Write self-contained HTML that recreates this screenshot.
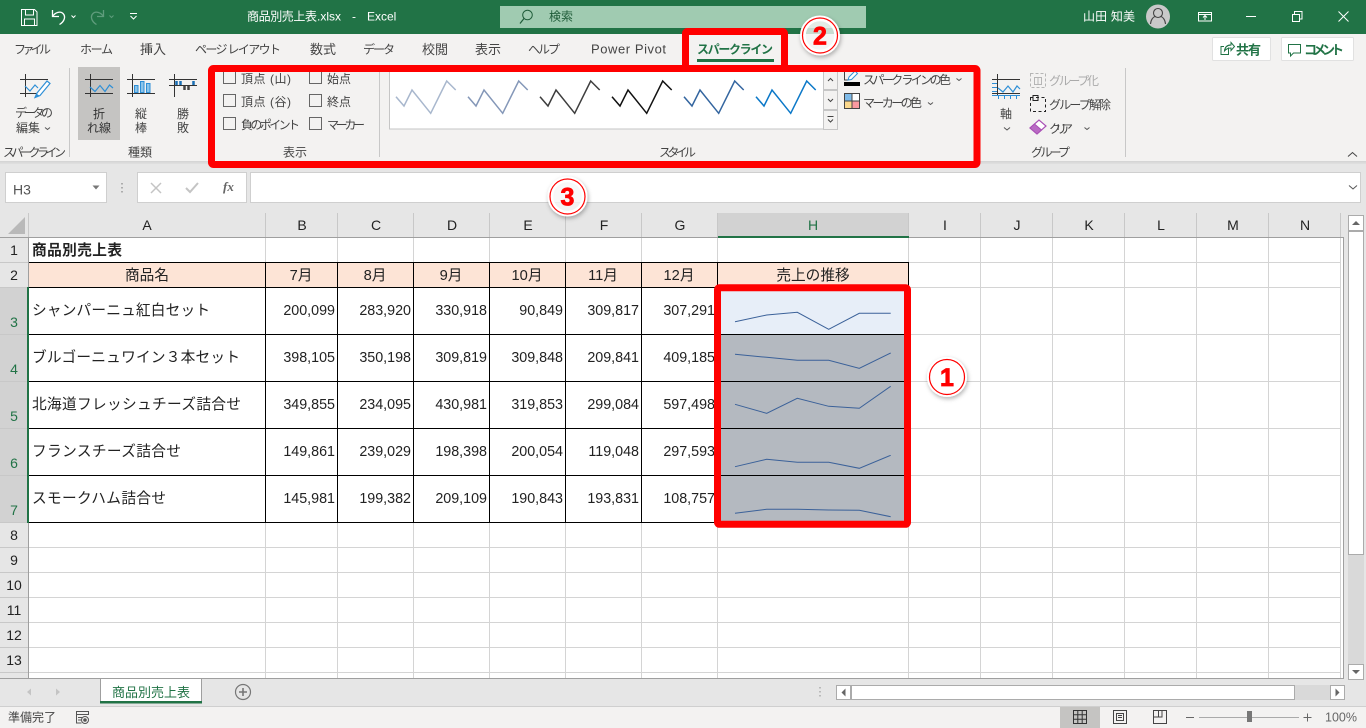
<!DOCTYPE html>
<html lang="ja"><head><meta charset="utf-8"><title>商品別売上表.xlsx - Excel</title>
<style>
html,body{margin:0;padding:0;background:#e6e6e6;width:1366px;height:728px;overflow:hidden}
svg{display:block}
text{font-family:"Liberation Sans","Noto Sans CJK JP",sans-serif;fill:#444;font-size:12px}
.c text,text.c{font-size:14.67px;fill:#222}
.n text{font-size:14.3px;fill:#222;text-anchor:end}
.m{text-anchor:middle}
.hd text{font-size:14px;fill:#222;text-anchor:middle}
.b{fill:none;stroke:#666;stroke-width:1}
.w{fill:#fff !important}
.g{fill:#217346 !important}
.ch{fill:none;stroke:#555;stroke-width:1}
.ax{fill:none;stroke:#333;stroke-width:1}
.bl{fill:none;stroke:#2e8fd6;stroke-width:1.2}
.sp{fill:none;stroke:#3b6199;stroke-width:1}
.gl{stroke:#d4d4d4;stroke-width:1}
.k{stroke:#000;stroke-width:1}
.t13{font-size:13px}
.num{font-weight:bold;font-size:25px;fill:#f00 !important;stroke:#f00;stroke-width:.8;text-anchor:middle}
</style></head><body>
<svg width="1366" height="728" viewBox="0 0 1366 728" xmlns="http://www.w3.org/2000/svg">
<defs><filter id="s" x="-30%" y="-30%" width="170%" height="170%"><feDropShadow dx="1" dy="2" stdDeviation="2" flood-color="#000" flood-opacity=".3"/></filter></defs>
<rect width="1366" height="728" fill="#e6e6e6"/>

<!-- title bar -->
<rect width="1366" height="34" fill="#217346"/>
<g fill="none" stroke="#fff" stroke-width="1">
<path d="M21.500 9.500h13l2.500 2.500v13.500h-15.500z"/><path d="M25.500 9.500v5.500h8v-5.500M24.500 25.500v-6.500h10v6.500"/>
<path d="M52.500 10v6.500h6.500" stroke-width="1.300"/><path d="M52.500 16.500c3-4.500 8-5.500 10.500-3c3 3 1.500 8-3.500 11" stroke-width="1.300"/>
<path d="M71.500 15.500l2 2l2-2"/>
<g stroke="#5f9c7c"><path d="M103.500 10v6.500h-6.500" stroke-width="1.300"/><path d="M103.500 16.500c-3-4.500-8-5.500-10.500-3c-3 3-1.500 8 3.500 11" stroke-width="1.300"/><path d="M109.500 15.500l2 2l2-2"/></g>
<path d="M130 13.500h7M130.500 16l3 3l3-3"/>
</g>
<text x="247" y="20.500" class="w" textLength="70">商品別売上表</text>
<text x="317" y="20.500" class="w">.xlsx</text>
<text x="352" y="20.500" class="w">-</text>
<text x="367" y="20.500" class="w">Excel</text>
<rect x="500" y="6" width="366" height="22" fill="#a0cbb1"/>
<circle cx="527.500" cy="15" r="4.800" fill="none" stroke="#1f5c39" stroke-width="1"/><path d="M524 18.500l-4 5" stroke="#1f5c39" stroke-width="1.200"/>
<text x="549" y="20.500" style="fill:#1f5c39" textLength="24">検索</text>
<text x="1083" y="20.500" class="w" textLength="52">山田 知美</text>
<circle cx="1158" cy="16.500" r="12" fill="#c9c9c9"/>
<g fill="none" stroke="#444" stroke-width="1.100"><circle cx="1158" cy="13" r="4.500"/><path d="M1150.500 24c.5-5 3-7 4.500-7.500M1165.500 24c-.5-5-3-7-4.500-7.500"/></g>
<g fill="none" stroke="#fff" stroke-width="1">
<path d="M1198.500 12.500h13v8.500h-13zM1198.500 14.500h13M1205 20v-4M1203 17.500l2-2l2 2"/>
<path d="M1246 16.500h10"/>
<path d="M1292.500 14.500h7v7h-7zM1294.500 14v-2.500h7.500v7.500h-2.500"/>
<path d="M1338.500 11.500l10 10M1348.500 11.500l-10 10"/>
</g>

<!-- ribbon -->
<rect y="34" width="1366" height="127" fill="#f3f2f1"/>
<rect y="161" width="1366" height="1.500" fill="#d5d5d5"/><rect y="162.500" width="1366" height="1.500" fill="#dedede"/>
<text x="14" y="53.500" textLength="37">ファイル</text>
<text x="80" y="53.500" textLength="33">ホーム</text>
<text x="140" y="54" class="t13" textLength="26">挿入</text>
<text x="195" y="53.500" textLength="86">ページ レイアウト</text>
<text x="310" y="54" class="t13" textLength="26">数式</text>
<text x="363" y="53.500" textLength="32">データ</text>
<text x="422" y="54" class="t13" textLength="26">校閲</text>
<text x="475" y="54" class="t13" textLength="26">表示</text>
<text x="528" y="53.500" textLength="32">ヘルプ</text>
<text x="591" y="53.500" style="font-size:13px" textLength="75">Power Pivot</text>
<text x="697" y="53.500" class="g" textLength="76" style="font-weight:bold">スパークライン</text>
<rect x="697" y="59" width="77" height="3" fill="#217346"/>

<rect x="1212.500" y="37.500" width="58" height="23" rx="1" fill="#fff" stroke="#e1e1e1"/>
<rect x="1281.500" y="37.500" width="72" height="23" rx="1" fill="#fff" stroke="#e1e1e1"/>
<g fill="none" stroke="#217346" stroke-width="1"><path d="M1228.500 47.500v7h-7.500v-8h3"/><path d="M1224.500 51c.5-4 3-6 6.500-6v-2.500l-0 0"/><path d="M1224.500 51c.5-4 3-6 6.500-6v-2.500l3.500 4l-3.500 4v-2.500c-2.500 0-5 1-6.500 3z"/><path d="M1288.500 44.500h12v8.500h-7l-3 3v-3h-2z"/></g>
<text x="1236" y="54.500" class="g" style="font-weight:bold;font-size:13px" textLength="25">共有</text>
<text x="1304" y="54.500" class="g" style="font-weight:bold;font-size:13px" textLength="40">コメント</text>

<!-- separators -->
<g stroke="#c8c8c8"><path d="M69.500 68v89M379.500 72v85M1125.500 68v89"/></g>
<rect x="78" y="67" width="42" height="73" fill="#c5c4c2"/>

<!-- edit data icon -->
<path class="ax" d="M20 79.500h28M25.500 74v23M20 93.500h20"/>
<path class="bl" d="M25 86l5 5l5-6l3 3"/>
<path d="M37 93l10-12l3 2.500l-10 12l-5 2z" fill="#fff" stroke="#2e8fd6" stroke-width="1.200"/><path d="M35 98l2-4l3 2z" fill="#2e8fd6"/>
<text x="15" y="117" textLength="38">データの</text>
<text x="16" y="132" textLength="24">編集</text><path class="ch" d="M45 127.500l2.500 2l2.500-2"/>
<!-- line type -->
<path class="ax" d="M85 79.500h28M90.500 74v23M85 93.500h28"/><path class="bl" d="M90 87l5 4.500l5-6l5 6l4.500-6.500l3.500 3"/>
<text x="99" y="118" class="m" style="fill:#333">折</text><text x="99" y="132" class="m" textLength="24" style="fill:#333">れ線</text>
<!-- column type -->
<path class="ax" d="M127 79.500h28M132.500 74v23M127 93.500h28"/>
<g fill="#8cc4ea" stroke="#2e8fd6"><rect x="134.500" y="85.500" width="3.500" height="7"/><rect x="140.500" y="81.500" width="3.500" height="11"/><rect x="146.500" y="83.500" width="3.500" height="9"/></g>
<text x="141" y="118" class="m">縦</text><text x="141" y="132" class="m">棒</text>
<!-- win loss -->
<path class="ax" d="M169 79.500h28M174.500 74v23M169 85.500h28"/>
<g fill="none" stroke="#1a6fb5"><path d="M176.500 81v4M180.500 81v4M193.500 81v4" stroke-width="2.500"/></g>
<g fill="none" stroke="#444"><path d="M184.500 86v4M188.500 86v4" stroke-width="2.500"/></g>
<text x="183" y="118" class="m">勝</text><text x="183" y="132" class="m">敗</text>

<!-- checkboxes -->
<rect class="b" x="223.500" y="71.500" width="12" height="12"/><rect class="b" x="223.500" y="94.500" width="12" height="12"/><rect class="b" x="223.500" y="117.500" width="12" height="12"/>
<rect class="b" x="309.500" y="71.500" width="12" height="12"/><rect class="b" x="309.500" y="94.500" width="12" height="12"/><rect class="b" x="309.500" y="117.500" width="12" height="12"/>
<text x="241" y="83" textLength="50">頂点 (山)</text>
<text x="241" y="106" textLength="50">頂点 (谷)</text>
<text x="241" y="129" textLength="59">負のポイント</text>
<text x="327" y="83" textLength="24">始点</text>
<text x="327" y="106" textLength="24">終点</text>
<text x="327" y="129" textLength="38">マーカー</text>

<!-- group labels -->
<text x="3" y="156.500" textLength="63">スパークライン</text>
<text x="128" y="156.500" textLength="24">種類</text>
<text x="283" y="156.500" textLength="24">表示</text>
<text x="659" y="156.500" textLength="37">スタイル</text>
<text x="1031" y="156.500" textLength="39">グループ</text>

<!-- gallery -->
<rect x="389.500" y="68.500" width="434" height="60.500" fill="#fff" stroke="#c6c6c6"/>
<g fill="#f3f2f1" stroke="#c6c6c6"><rect x="823.500" y="68.500" width="14" height="21"/><rect x="823.500" y="90.500" width="14" height="19"/><rect x="823.500" y="110.500" width="14" height="19"/></g>
<path fill="none" stroke="#444" d="M828 81l2.500-2.500l2.500 2.500M828 99l2.500 2.500l2.500-2.500M827.500 116.500h6M828 119.500l2.500 2.500l2.500-2.500"/>
<g fill="none" stroke-width="1.500">
<path stroke="#a8b7cd" d="M396 96.700l8 9.300l8-16l18.700 23.300l16-32.300l9 9"/>
<path stroke="#8497b8" d="M468 96.700l8 9.300l8-16l18.700 23.300l16-32.300l9 9"/>
<path stroke="#3d3d3d" d="M540 96.700l8 9.300l8-16l18.700 23.300l16-32.300l9 9"/>
<path stroke="#111" d="M612 96.700l8 9.300l8-16l18.700 23.300l16-32.300l9 9"/>
<path stroke="#33659f" d="M684 96.700l8 9.300l8-16l18.700 23.300l16-32.300l9 9"/>
<path stroke="#0b78c8" d="M756 96.700l8 9.300l8-16l18.700 23.300l16-32.300l9 9"/>
</g>

<!-- colour buttons -->
<rect x="844" y="82" width="16" height="4" fill="#000"/>
<path d="M844.500 72v8h3" fill="none" stroke="#444"/><path d="M848 80l1-3l6-6l2.500 2.500l-6 6z" fill="#fff" stroke="#2e8fd6"/>
<text x="863" y="84" textLength="88">スパーク ラインの色</text><path class="ch" d="M956.500 78.500l2.500 2l2.500-2"/>
<rect x="844.500" y="93.500" width="15" height="15" fill="#fff" stroke="#444"/>
<rect x="845" y="94" width="7" height="7" fill="#7fbbe9"/><rect x="845" y="101.500" width="7" height="6.500" fill="#fbd88c"/><rect x="852.500" y="101.500" width="6.500" height="6.500" fill="#fb9aa0"/>
<path d="M852 94v14M845 101h14" stroke="#444"/>
<text x="863" y="107" textLength="59">マーカーの色</text><path class="ch" d="M928 102.500l2.500 2l2.500-2"/>

<!-- axis -->
<path class="ax" d="M992 79.500h28M997.500 74v22M992 93.500h28"/>
<path class="bl" d="M998 88l5 4l5-6l5 6l4-6l3 3"/>
<path d="M992 83.500h5M992 87.500h5M992 91.500h5M992 95.500h28M998.500 96v3M1004.500 96v3M1010.500 96v3M1016.500 96v3" stroke="#2e8fd6"/>
<text x="1006" y="118" class="m">軸</text><path class="ch" d="M1004 127.500l3 2.500l3-2.500"/>
<!-- group -->
<g fill="none" stroke="#b5b5b5"><path d="M1030.500 73.500h15v14h-15z" stroke-dasharray="3 2"/><path d="M1034.500 77.500h7v7h-7zM1038 77v8"/></g>
<text x="1049" y="85" style="fill:#aaa" textLength="50">グループ化</text>
<g fill="none" stroke="#222"><path d="M1030.500 97.500h15v14h-15z" stroke-dasharray="3 2.500"/><path d="M1033 95.500h5v5h-5z"/></g>
<text x="1049" y="109" textLength="62">グループ解除</text>
<path d="M1030 128l9-8l7 6l-9 8z" fill="#fff" stroke="#a94fb5" stroke-width="1.200"/><path d="M1030 128l4.500-4l7 6l-4.500 4z" fill="#b96ac4" stroke="#a94fb5"/>
<text x="1049" y="133" textLength="24">クリア</text><path class="ch" d="M1084.500 127.500l2.500 2l2.500-2"/>
<path d="M1348 156.500l4.500-4l4.500 4" fill="none" stroke="#444"/>

<!-- formula bar -->
<rect x="5.500" y="172.500" width="101" height="30" fill="#fff" stroke="#cfcfcf"/>
<text x="13" y="194.500" style="font-size:14px;fill:#555">H3</text>
<path d="M92.500 185.500h7l-3.500 4z" fill="#777"/>
<path d="M122 183v1.500M122 187v1.500M122 191v1.500" stroke="#999" stroke-width="1.500"/>
<rect x="137.500" y="172.500" width="109" height="30" fill="#fff" stroke="#cfcfcf"/>
<path d="M151 183l10 10M161 183l-10 10" stroke="#c4c4c4" stroke-width="1.500"/>
<path d="M186 188l4 4l8-9" fill="none" stroke="#c4c4c4" stroke-width="2"/>
<text x="223" y="191" style="font:italic bold 13px 'Liberation Serif',serif;fill:#666">fx</text>
<rect x="250.500" y="172.500" width="1110" height="30" fill="#fff" stroke="#cfcfcf"/>
<path class="ch" d="M1349 185.500l4 3.500l4-3.500"/>

<!-- sheet -->
<rect x="29" y="237" width="1315" height="441" fill="#fff"/>
<rect x="0" y="213" width="1344" height="24" fill="#e6e6e6"/>
<rect x="0" y="237" width="28" height="441" fill="#e6e6e6"/>
<rect x="0" y="287" width="28" height="235" fill="#d2d2d2"/>
<rect x="718" y="213" width="190" height="24" fill="#d2d2d2"/>
<path d="M8 234h17v-17z" fill="#b9b9b9"/>
<rect x="29" y="263" width="879" height="24" fill="#fde4d6"/>
<rect x="718" y="288" width="190" height="46" fill="#e7eef8"/>
<rect x="718" y="335" width="190" height="187" fill="#b4b9c0"/>

<path class="gl" d="M29 262.500H1340M908 287.500H1340M908 334.500H1340M908 381.500H1340M908 428.500H1340M908 475.500H1340M29 522.500H1340M29 547.500H1340M29 572.500H1340M29 597.500H1340M29 622.500H1340M29 647.500H1340M29 672.500H1340"/>
<path class="gl" d="M265.500 237V262M337.500 237V262M413.500 237V262M489.500 237V262M565.500 237V262M641.500 237V262M717.500 237V262M908.500 237V262"/>
<path class="gl" d="M265.500 523V678M337.500 523V678M413.500 523V678M489.500 523V678M565.500 523V678M641.500 523V678M717.500 523V678M908.500 523V678"/>
<path class="gl" d="M980.500 237V678M1052.500 237V678M1124.500 237V678M1196.500 237V678M1268.500 237V678M1340.500 237V678"/>
<path stroke="#c8c8c8" d="M0 262.500h28M0 547.500h28M0 572.500h28M0 597.500h28M0 622.500h28M0 647.500h28M0 672.500h28M0 522.500h28M0 287.500h28M0 334.500h28M0 381.500h28M0 428.500h28M0 475.500h28M265.500 213v24M337.500 213v24M413.500 213v24M489.500 213v24M565.500 213v24M641.500 213v24M717.500 213v24M908.500 213v24M980.500 213v24M1052.500 213v24M1124.500 213v24M1196.500 213v24M1268.500 213v24M1340.500 213v24M28.500 213v24"/>
<path class="k" d="M29 262.500H909M29 287.500H909M29 334.500H909M29 381.500H909M29 428.500H909M29 475.500H909M29 522.500H909M265.500 262V523M337.500 262V523M413.500 262V523M489.500 262V523M565.500 262V523M641.500 262V523M717.500 262V523M908.500 262V288"/>
<path stroke="#9f9f9f" d="M0 237.500H1344M28.500 237V678M1343.500 237V678"/>
<rect x="27" y="287" width="2" height="236" fill="#217346"/>
<rect x="718" y="236" width="191" height="2" fill="#217346"/>

<!-- headers -->
<g class="hd">
<text x="147" y="230">A</text><text x="302" y="230">B</text><text x="376" y="230">C</text><text x="452" y="230">D</text><text x="528" y="230">E</text><text x="604" y="230">F</text><text x="680" y="230">G</text><text x="813" y="230" class="g">H</text><text x="945" y="230">I</text><text x="1017" y="230">J</text><text x="1089" y="230">K</text><text x="1161" y="230">L</text><text x="1233" y="230">M</text><text x="1305" y="230">N</text>
<text x="14" y="255">1</text><text x="14" y="280">2</text><text x="14" y="327" class="g">3</text><text x="14" y="374" class="g">4</text><text x="14" y="421" class="g">5</text><text x="14" y="468" class="g">6</text><text x="14" y="515" class="g">7</text><text x="14" y="540">8</text><text x="14" y="565">9</text><text x="14" y="590">10</text><text x="14" y="615">11</text><text x="14" y="640">12</text><text x="14" y="665">13</text>
</g>

<!-- cells -->
<g class="c">
<text x="32" y="255" style="font-weight:bold" textLength="90">商品別売上表</text>
<text x="147" y="280" class="m">商品名</text>
<text x="301" y="280" class="m">7月</text><text x="375" y="280" class="m">8月</text><text x="451" y="280" class="m">9月</text><text x="527" y="280" class="m">10月</text><text x="603" y="280" class="m">11月</text><text x="679" y="280" class="m">12月</text>
<text x="813" y="280" class="m">売上の推移</text>
<text x="32" y="315" textLength="178">シャンパーニュ紅白セット</text>
<text x="32" y="362" textLength="208">ブルゴーニュワイン３本セット</text>
<text x="32" y="409" textLength="209">北海道フレッシュチーズ詰合せ</text>
<text x="32" y="456" textLength="149">フランスチーズ詰合せ</text>
<text x="32" y="503" textLength="134">スモークハム詰合せ</text>
</g>
<g class="n">
<text x="335" y="315">200,099</text><text x="411" y="315">283,920</text><text x="487" y="315">330,918</text><text x="563" y="315">90,849</text><text x="639" y="315">309,817</text><text x="715" y="315">307,291</text>
<text x="335" y="362">398,105</text><text x="411" y="362">350,198</text><text x="487" y="362">309,819</text><text x="563" y="362">309,848</text><text x="639" y="362">209,841</text><text x="715" y="362">409,185</text>
<text x="335" y="409">349,855</text><text x="411" y="409">234,095</text><text x="487" y="409">430,981</text><text x="563" y="409">319,853</text><text x="639" y="409">299,084</text><text x="715" y="409">597,498</text>
<text x="335" y="456">149,861</text><text x="411" y="456">239,029</text><text x="487" y="456">198,398</text><text x="563" y="456">200,054</text><text x="639" y="456">119,048</text><text x="715" y="456">297,593</text>
<text x="335" y="503">145,981</text><text x="411" y="503">199,382</text><text x="487" y="503">209,109</text><text x="563" y="503">190,843</text><text x="639" y="503">193,831</text><text x="715" y="503">108,757</text>
</g>

<!-- sparklines -->
<path class="sp" d="M735 321.700L766.700 315L797.300 312.300L828.700 329.300L859.300 313.300L890.700 313.300"/>
<path class="sp" d="M735 354.300L766.700 357.300L797.300 360.300L828.700 360.300L859.300 368.300L890.700 353"/>
<path class="sp" d="M735 404.300L766.700 413.300L797.300 398.300L828.700 406.300L859.300 408.300L890.700 386.300"/>
<path class="sp" d="M735 466.700L766.700 459.300L797.300 462.300L828.700 462.300L859.300 468.300L890.700 455.300"/>
<path class="sp" d="M735 513.300L766.700 509.300L797.300 509.300L828.700 510L859.300 510.300L890.700 516.700"/>

<!-- vertical scrollbar -->
<rect x="1344" y="213" width="22" height="465" fill="#e6e6e6"/>
<rect x="1348" y="215" width="16" height="465" fill="#d9d9d9"/>
<rect x="1348.500" y="215.500" width="15" height="15" fill="#fff" stroke="#ababab"/>
<path d="M1352 225h8l-4-4z" fill="#666"/>
<rect x="1348.500" y="231.500" width="15" height="323" fill="#fff" stroke="#ababab"/>
<rect x="1348.500" y="664.500" width="15" height="15" fill="#fff" stroke="#ababab"/>
<path d="M1352 670h8l-4 4z" fill="#666"/>

<!-- sheet tabs -->
<rect y="680" width="1366" height="26" fill="#e6e6e6"/>
<rect y="678" width="1344" height="2" fill="#e6e6e6"/>
<path d="M0 678.500H1344" stroke="#9f9f9f"/>
<path d="M31 688.500v7l-4-3.500zM56 688.500v7l4-3.500z" fill="#c4c4c4"/>
<path d="M100.500 703V678.500H201.500V703" fill="#fff" stroke="#9f9f9f"/>
<rect x="100" y="701" width="102" height="2.500" fill="#217346"/>
<text x="112" y="697" class="g" style="font-size:13px" textLength="78">商品別売上表</text>
<circle cx="243" cy="692" r="7.500" fill="none" stroke="#777" stroke-width="1.200"/><path d="M239 692h8M243 688v8" stroke="#777" stroke-width="1.600"/>
<path d="M820 687v1.500M820 691v1.500M820 695v1.500" stroke="#aaa" stroke-width="1.500"/>
<rect x="836" y="685" width="509" height="15" fill="#d9d9d9"/>
<rect x="836.500" y="685.500" width="14" height="14" fill="#fff" stroke="#ababab"/>
<rect x="851.500" y="685.500" width="443" height="14" fill="#fff" stroke="#ababab"/>
<rect x="1330.500" y="685.500" width="14" height="14" fill="#fff" stroke="#ababab"/>
<path d="M845.500 688.500v8l-4-4zM1335.500 688.500v8l4-4z" fill="#666"/>

<!-- status bar -->
<rect y="706" width="1366" height="22" fill="#f3f2f1"/>
<path d="M0 706.500H1366" stroke="#cfcfcf"/>
<text x="8" y="721.500" textLength="48">準備完了</text>
<g fill="none" stroke="#555"><path d="M76.500 711.500h12v3h-12zM76.500 714.500v8.500h5M78 717.500h4M78 720h3"/><circle cx="85" cy="720" r="3.500"/><circle cx="85" cy="720" r="1.300" fill="#555"/></g>
<rect x="1060" y="707" width="40" height="21" fill="#c5c4c2"/>
<path d="M1073.500 710.500h13v13h-13zM1077.800 710.500v13M1082.200 710.500v13M1073.500 714.800h13M1073.500 719.200h13" fill="none" stroke="#333"/>
<path d="M1113.500 710.500h13v13h-13zM1116.500 713.500h7v7h-7zM1118 715.500h4M1118 717.500h4" fill="none" stroke="#444"/>
<path d="M1153.500 710.500h13v13h-13zM1158.500 710.500v6.500h3.500v-6.500M1153.500 717h5" fill="none" stroke="#444"/>
<path d="M1186 717.500h8M1303.500 717.500h8M1307.500 713.500v8" stroke="#666" stroke-width="1"/>
<path d="M1199 717.500h100" stroke="#aaa" stroke-width="1"/>
<rect x="1247" y="711" width="5" height="11" fill="#777"/>
<text x="1325" y="721.500" style="font-size:12.500px;fill:#666">100%</text>

<!-- red annotation frames -->
<g fill="none" stroke="#f00" stroke-width="7" stroke-linejoin="round">
<rect x="685.500" y="31.500" width="99" height="37" rx="2"/>
<rect x="211.500" y="68.500" width="765.500" height="96" rx="2"/>
<rect x="717.500" y="287.800" width="190" height="236.500" rx="2"/>
</g>

<!-- number badges -->
<g filter="url(#s)" fill="#fff" fill-opacity=".72" stroke="#fff" stroke-width="4">
<circle cx="820" cy="35.500" r="18"/><circle cx="947" cy="377" r="18"/><circle cx="567.500" cy="196.500" r="18"/>
</g>
<g fill="none" stroke="#fff" stroke-width="2.500">
<circle cx="820" cy="35.500" r="15.500"/><circle cx="947" cy="377" r="15.500"/><circle cx="567.500" cy="196.500" r="15.500"/>
</g>
<circle cx="947" cy="377" r="16" fill="#fff"/>
<g fill="none" stroke="#f00" stroke-width="1.200">
<circle cx="820" cy="35.500" r="17.500"/><circle cx="947" cy="377" r="17.500"/><circle cx="567.500" cy="196.500" r="17.500"/>
</g>
<text x="820" y="44.500" class="num">2</text>
<text x="947" y="386" class="num">1</text>
<text x="567.500" y="205.500" class="num">3</text>
</svg>
</body></html>
